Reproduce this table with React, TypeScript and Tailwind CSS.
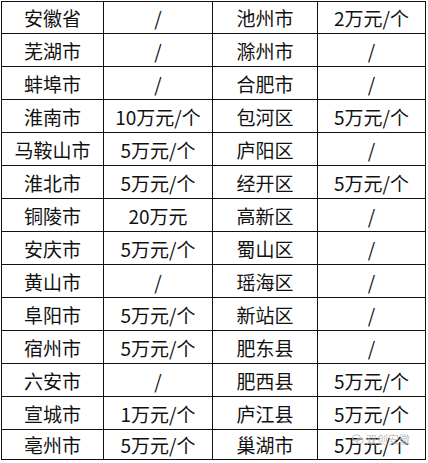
import React from "react";

const rows: [string, string, string, string][] = [
  ["安徽省", "/", "池州市", "2万元/个"],
  ["芜湖市", "/", "滁州市", "/"],
  ["蚌埠市", "/", "合肥市", "/"],
  ["淮南市", "10万元/个", "包河区", "5万元/个"],
  ["马鞍山市", "5万元/个", "庐阳区", "/"],
  ["淮北市", "5万元/个", "经开区", "5万元/个"],
  ["铜陵市", "20万元", "高新区", "/"],
  ["安庆市", "5万元/个", "蜀山区", "/"],
  ["黄山市", "/", "瑶海区", "/"],
  ["阜阳市", "5万元/个", "新站区", "/"],
  ["宿州市", "5万元/个", "肥东县", "/"],
  ["六安市", "/", "肥西县", "5万元/个"],
  ["宣城市", "1万元/个", "庐江县", "5万元/个"],
  ["亳州市", "5万元/个", "巢湖市", "5万元/个"],
];

export default function App() {
  return (
    <div className="w-[428px] h-[463px] bg-white relative overflow-hidden" style={{ fontFamily: '"Noto Sans CJK SC", "Noto Sans", sans-serif' }}>
      <div className="absolute left-px top-px">
        <div className="grid grid-cols-[101px_108px_104px_107px] grid-rows-[31px_repeat(12,32px)_29px] gap-px p-px bg-[#111]">
          {rows.map((r, i) =>
            r.map((c, j) => (
              <div key={i + "-" + j} className="bg-white flex items-center justify-center text-[19px] leading-none text-[#111]">
                {c}
              </div>
            ))
          )}
        </div>
      </div>
      <div className="absolute left-[352px] top-[434px] flex items-center gap-[2px] text-[11px] leading-none text-[#bdbdbd] opacity-90">
        <svg width="12" height="11" viewBox="0 0 12 11">
          <ellipse cx="4.5" cy="4" rx="4" ry="3.3" fill="none" stroke="#bbb" strokeWidth="1" />
          <ellipse cx="8" cy="6.8" rx="3.3" ry="2.8" fill="none" stroke="#bbb" strokeWidth="1" />
        </svg>
        <span>双创安徽</span>
      </div>
    </div>
  );
}
